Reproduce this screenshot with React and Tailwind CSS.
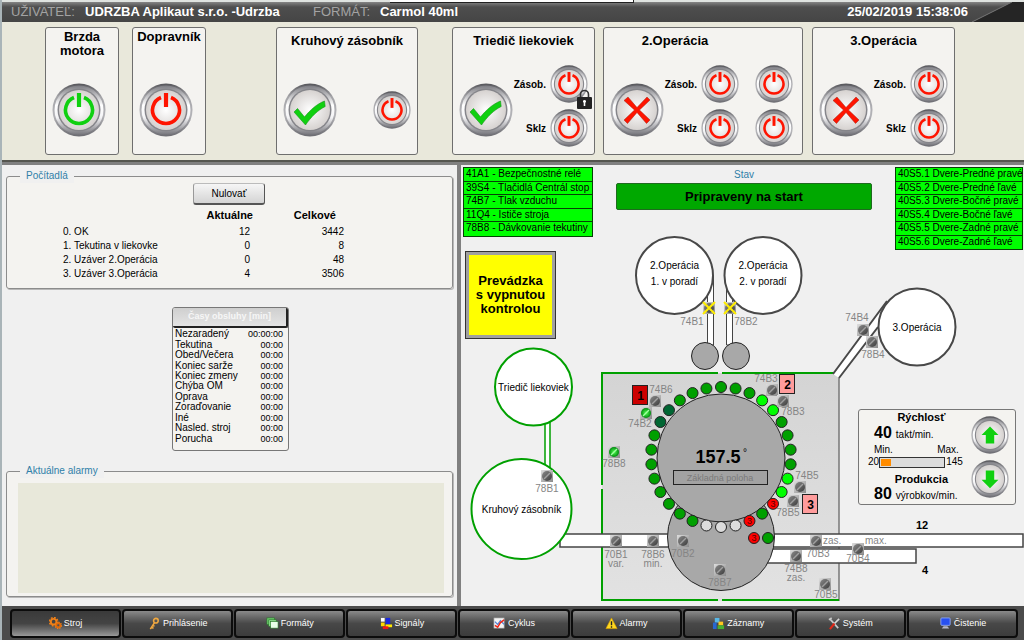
import { useId } from "react"

const COUNTERS = [
  { label: "0. OK", current: 12, total: 3442 },
  { label: "1. Tekutina v liekovke", current: 0, total: 8 },
  { label: "2. Uzáver 2.Operácia", current: 0, total: 48 },
  { label: "3. Uzáver 3.Operácia", current: 4, total: 3506 },
]

const TIMES = [
  ["Nezaradený", "00:00:00"],
  ["Tekutina", "00:00"],
  ["Obed/Večera", "00:00"],
  ["Koniec sarže", "00:00"],
  ["Koniec zmeny", "00:00"],
  ["Chýba OM", "00:00"],
  ["Oprava", "00:00"],
  ["Zoraďovanie", "00:00"],
  ["Iné", "00:00"],
  ["Nasled. stroj", "00:00"],
  ["Porucha", "00:00"],
]

const SAFETY = [
  "41A1 - Bezpečnostné relé",
  "39S4 - Tlačidlá Centrál stop",
  "74B7 - Tlak vzduchu",
  "11Q4 - Ističe stroja",
  "78B8 - Dávkovanie tekutiny",
]

const DOORS = [
  "40S5.1 Dvere-Predné pravé",
  "40S5.2 Dvere-Predné ľavé",
  "40S5.3 Dvere-Bočné pravé",
  "40S5.4 Dvere-Bočné ľavé",
  "40S5.5 Dvere-Zadné pravé",
  "40S5.6 Dvere-Zadné ľavé",
]

// sensor centre, label centre, optional second line
const SENSORS = [
  { id: "78B1", x: 547, y: 476, tx: 547, ty: 492 },
  { id: "74B1", x: 709, y: 308, tx: 692, ty: 325, off: true },
  { id: "78B2", x: 730, y: 308, tx: 746, ty: 325, off: true },
  { id: "74B4", x: 863, y: 330, tx: 857, ty: 321 },
  { id: "78B4", x: 872, y: 342, tx: 873, ty: 358 },
  { id: "74B6", x: 655, y: 401, tx: 661, ty: 393 },
  { id: "74B2", x: 646, y: 413, tx: 640, ty: 427, on: true },
  { id: "78B8", x: 614, y: 452, tx: 614, ty: 467, on: true },
  { id: "74B3", x: 772, y: 390, tx: 766, ty: 382 },
  { id: "78B3", x: 783, y: 401, tx: 793, ty: 415 },
  { id: "74B5", x: 800, y: 487, tx: 807, ty: 479 },
  { id: "78B5", x: 793, y: 501, tx: 788, ty: 516 },
  { id: "70B1", x: 616, y: 541, tx: 616, ty: 558, sub: "var." },
  { id: "78B6", x: 653, y: 541, tx: 653, ty: 558, sub: "min." },
  { id: "70B2", x: 683, y: 541, tx: 683, ty: 557 },
  { id: "78B7", x: 720, y: 570, tx: 720, ty: 586 },
  { id: "70B3", x: 816, y: 541, tx: 818, ty: 557 },
  { id: "74B8", x: 796, y: 556, tx: 796, ty: 572, sub: "zas." },
  { id: "70B5", x: 825, y: 584, tx: 826, ty: 598 },
  { id: "70B4", x: 858, y: 549, tx: 858, ty: 562 },
]

// carousel pockets, clockwise from the top
const POCKETS = "gggllggggllrgrwwwggggggggddggg"
const POCKET_FILL = { g: "#00a000", l: "#00ff00", r: "#ff0000", w: "#dcdcdc", d: "#006633" }

function RoundButton({ size = "small", label, children }) {
  const id = useId()
  const big = size === "large"
  return (
    <button type="button" aria-label={label} className={`block shrink-0 rounded-full ${big ? "size-[54px]" : "size-[38px]"}`}>
      <svg viewBox="-27 -27 54 54" className="size-full">
        <defs>
          <linearGradient id={`${id}a`} x1="0" y1="0" x2="0" y2="1">
            <stop offset="0" stopColor="#55555a" />
            <stop offset="0.25" stopColor="#a4a4a8" />
            <stop offset="0.6" stopColor="#b4b4b8" />
            <stop offset="1" stopColor="#6c6c72" />
          </linearGradient>
          <linearGradient id={`${id}b`} x1="0" y1="0" x2="0" y2="1">
            <stop offset="0" stopColor="#7c7c82" />
            <stop offset="0.4" stopColor="#ffffff" />
            <stop offset="0.65" stopColor="#f4f4f6" />
            <stop offset="1" stopColor="#77777d" />
          </linearGradient>
          <radialGradient id={`${id}c`}>
            <stop offset="0" stopColor="#ffffff" />
            <stop offset="1" stopColor="#d6d2d0" />
          </radialGradient>
        </defs>
        <circle r="26.500" fill={`url(#${id}a)`} />
        <circle r="24.500" fill={`url(#${id}b)`} />
        <circle r="21.500" fill="#85858a" />
        <circle r="20" fill={`url(#${id}c)`} />
        {children}
      </svg>
    </button>
  )
}

function Power({ color = "#ff1400", size, label }) {
  return (
    <RoundButton size={size} label={label}>
      <path d="M-5 -12.500A13.500 13.500 0 1 0 5 -12.500" fill="none" stroke={color} strokeWidth="3.600" />
      <path d="M0 -17V-3" stroke={color} strokeWidth="4.200" />
    </RoundButton>
  )
}

function Check({ label }) {
  return (
    <RoundButton size="large" label={label}>
      <path d="M-16 2L-12.500 -1.500L-5.500 7C0 0 7 -6 14.500 -9L15.200 -3.500C8 0 1 7 -4.500 15Z" fill="#10d010" stroke="#14931a" strokeWidth="0.6" />
    </RoundButton>
  )
}

function Cross({ label }) {
  return (
    <RoundButton size="large" label={label}>
      <path d="M-13 -9.500L-9 -13L0 -2.500L10 -13L13 -10L2.500 0L13 10L9.500 13.500L0 2.500L-9.500 13.500L-13 10L-2.500 0Z" fill="#ff1400" stroke="#a02010" strokeWidth="0.5" />
    </RoundButton>
  )
}

function Lock() {
  return (
    <svg viewBox="0 0 15 20" className="pointer-events-none absolute -right-1 top-6 h-5 w-[15px]">
      <path d="M3.500 9V5.500a4 4 0 0 1 8 0V9" fill="none" stroke="#333" strokeWidth="1.600" />
      <rect y="8" width="15" height="12" rx="1" fill="#222" />
      <path d="M7.500 11a1.500 1.500 0 0 1 .8 2.800V17H6.700v-3.200A1.500 1.500 0 0 1 7.500 11" fill="#fff" />
    </svg>
  )
}

function Card({ title, className = "", children }) {
  return (
    <section className={`flex h-[128px] flex-col rounded-[3px] border border-[#6e6e6e] bg-[#f4f3f0] ${className}`}>
      <h2 className="pt-[2px] text-center text-[13px] leading-[14px] font-bold">{title}</h2>
      {children}
    </section>
  )
}

function FeedControls({ columns = 1, locked, name }) {
  const cols = Array.from({ length: columns }, (_, i) => i)
  return (
    <div className="flex flex-col gap-[6px]">
      {["Zásob.", "Sklz"].map((row, r) => (
        <div key={row} className="flex items-center justify-end gap-1">
          <span className="text-[10px] font-bold">{row}</span>
          <div className="flex gap-4">
            {cols.map((c) => (
              <div key={c} className="relative">
                <Power label={`${name} ${row} ${c + 1}`} />
                {locked && r === 0 && <Lock />}
              </div>
            ))}
          </div>
        </div>
      ))}
    </div>
  )
}

function Toolbar() {
  return (
    <div className="grid grid-cols-[43fr_74fr_13fr_74fr_70fr_142fr_34fr_143fr_8fr_200fr_9fr_143fr_69fr] border-b-2 border-[#55564f] bg-[#e9e8db] py-[5px]">
      <Card title={<>Brzda<br />motora</>} className="col-start-2">
        <div className="mt-auto mb-[17px] flex justify-center pr-[6px]">
          <Power size="large" color="#10d010" label="Brzda motora" />
        </div>
      </Card>
      <Card title="Dopravník" className="col-start-4">
        <div className="mt-auto mb-[17px] flex justify-center pr-[6px]">
          <Power size="large" label="Dopravník" />
        </div>
      </Card>
      <Card title="Kruhový zásobník" className="col-start-6 pt-1">
        <div className="mt-auto mb-[17px] flex items-center justify-between px-[6px]">
          <Check label="Kruhový zásobník" />
          <Power label="Kruhový zásobník zap." />
        </div>
      </Card>
      <Card title="Triedič liekoviek" className="col-start-8 pt-1">
        <div className="mt-auto mb-[7px] flex items-end justify-between px-[6px]">
          <div className="pb-[10px]"><Check label="Triedič liekoviek" /></div>
          <FeedControls name="Triedič" locked />
        </div>
      </Card>
      <Card title={<span className="block pr-14">2.Operácia</span>} className="col-start-10 pt-1">
        <div className="mt-auto mb-[7px] flex items-end justify-between px-[6px] pr-[9px]">
          <div className="pb-[10px]"><Cross label="2.Operácia" /></div>
          <FeedControls name="2.Operácia" columns={2} />
        </div>
      </Card>
      <Card title="3.Operácia" className="col-start-12 pt-1">
        <div className="mt-auto mb-[7px] flex items-end justify-between px-[6px]">
          <div className="pb-[10px]"><Cross label="3.Operácia" /></div>
          <FeedControls name="3.Operácia" />
        </div>
      </Card>
    </div>
  )
}

function Header() {
  return (
    <header className="relative bg-[#dfe3e0] pt-[2px]">
      <div className="absolute top-0 left-[38%] h-[3px] w-[244px] border-r border-b border-[#222] bg-white" />
      <div className="flex h-5 items-center bg-linear-to-b from-[#858585] via-[#4e4e4e] via-25% to-[#454545] pl-[9px] text-[13px] leading-5 text-white">
        <span className="w-[74px] text-[#a3a3a3]">UŽIVATEĽ:</span>
        <span className="w-[228px] font-bold whitespace-nowrap">UDRZBA Aplikaut s.r.o. -Udrzba</span>
        <span className="w-[67px] text-[#a3a3a3]">FORMÁT:</span>
        <span className="font-bold">Carmol 40ml</span>
        <time className="ml-auto pr-1 font-bold">25/02/2019 15:38:06</time>
        <svg viewBox="0 0 52 20" className="h-5 w-[52px]">
          <path d="M0 20L40 0H52V20Z" fill="#252525" />
          <path d="M0 20L40 0" stroke="#777" />
        </svg>
      </div>
    </header>
  )
}

function Counters() {
  return (
    <fieldset className="rounded-[3px] border border-[#8c8c8c] bg-[#f4f3f0] pb-[7px] shadow-[1px_1px_0_#b8b8b8]">
      <legend className="ml-[13px] bg-[#f0f0f0] px-[6px] text-[10px] leading-[14px] text-[#2f7fa8]">Počítadlá</legend>
      <div className="flex pl-[186px]">
        <button type="button" className="h-[22px] w-[72px] rounded-[3px] border border-t-[#bbb] border-r-[#555] border-b-2 border-b-[#555] border-l-[#999] bg-linear-to-b from-[#f6f6f6] to-[#d4d4d4] text-[10px]">
          Nulovať
        </button>
      </div>
      <table className="ml-[56px] text-[10px] leading-[14px]">
        <thead>
          <tr className="h-5 text-[11px]">
            <td className="w-[110px]" />
            <th className="w-[80px] text-right">Aktuálne</th>
            <th className="w-[91px] pr-2 text-right">Celkové</th>
          </tr>
        </thead>
        <tbody>
          {COUNTERS.map((c) => (
            <tr key={c.label}>
              <td className="whitespace-nowrap">{c.label}</td>
              <td className="pr-[3px] text-right">{c.current}</td>
              <td className="text-right">{c.total}</td>
            </tr>
          ))}
        </tbody>
      </table>
    </fieldset>
  )
}

function OperatorTimes() {
  return (
    <section className="mt-[18px] ml-[166px] w-[117px] rounded-[3px] border border-[#777] bg-[#f4f3f0] pb-[6px]">
      <button type="button" className="block h-5 w-full rounded-[2px] border-r-2 border-b-2 border-[#222] bg-linear-to-b from-[#cfcfcf] to-[#e4e4e4] text-[9px] font-bold text-[#f6f6f6]">
        Časy obsluhy [min]
      </button>
      <table className="mt-px h-[115px] w-full text-[10px] leading-[10px]">
        <tbody>
          {TIMES.map(([name, value]) => (
            <tr key={name}>
              <td className="p-0 pl-[2px] whitespace-nowrap">{name}</td>
              <td className="p-0 pr-[5px] text-right text-[9px]">{value}</td>
            </tr>
          ))}
        </tbody>
      </table>
    </section>
  )
}

function Alarms() {
  return (
    <fieldset className="mt-auto rounded-[3px] border border-[#8c8c8c] bg-[#f4f3f0] px-2 pb-[3px] shadow-[1px_1px_0_#b8b8b8]">
      <legend className="ml-[5px] bg-[#f0f0f0] px-[6px] text-[10px] leading-[14px] text-[#2f7fa8]">Aktuálne alarmy</legend>
      <div className="mt-[5px] ml-[3px] h-[110px] bg-[#e8e8da]" />
    </fieldset>
  )
}

function SignalList({ items, className }) {
  return (
    <ul className={`grid auto-rows-fr divide-y divide-[#064006] border border-[#064006] bg-[#00ff00] text-[10px] leading-[12px] ${className}`}>
      {items.map((item) => (
        <li key={item} className="pl-[2px] whitespace-nowrap">{item}</li>
      ))}
    </ul>
  )
}

function Sensor({ x, y, on, off }) {
  return (
    <g transform={`translate(${x} ${y})`}>
      <rect x="-6" y="-6" width="12" height="12" fill="url(#plate)" />
      <circle r="5" fill={on ? "url(#lampOn)" : "url(#lamp)"} />
      {off ? (
        <path d="M-6 -6L6 6M-6 6L6 -6" stroke="#ffee00" strokeWidth="2" />
      ) : (
        <path d="M-3 3L3 -3" stroke={on ? "#a0ffa0" : "#a0a0a0"} strokeWidth="1.500" />
      )}
    </g>
  )
}

function Tank({ x, y, r = 38.5, color = "#484848", lines }) {
  return (
    <g>
      <circle cx={x} cy={y} r={r} fill="#fff" stroke={color} strokeWidth="2" />
      {lines.map((line, i) => (
        <text key={line} x={x} y={y + 4 + (lines.length > 1 ? i * 16 - 11 : 0)} fontSize="10" textAnchor="middle">{line}</text>
      ))}
    </g>
  )
}

function Badge({ x, y, fill, children }) {
  return (
    <g>
      <rect x={x} y={y} width="15" height="19" fill={fill} stroke="#222" />
      <text x={x + 8} y={y + 14} fontSize="12" fontWeight="bold" textAnchor="middle">{children}</text>
    </g>
  )
}

function Pocket({ x, y, kind }) {
  return (
    <g>
      <circle cx={x} cy={y} r="5.500" fill={POCKET_FILL[kind]} stroke="#222" />
      {kind === "r" && <text x={x} y={y + 3} fontSize="9" textAnchor="middle" fill="#500">3</text>}
    </g>
  )
}

function MachineDiagram() {
  return (
    <svg viewBox="461 165 563 441" preserveAspectRatio="xMinYMin meet" className="absolute inset-0 size-full" role="img" aria-label="Schéma stroja">
      <defs>
        <linearGradient id="plate" x1="0" y1="0" x2="1" y2="1">
          <stop offset="0" stopColor="#dedede" />
          <stop offset="1" stopColor="#8a8a8a" />
        </linearGradient>
        <linearGradient id="lamp" x1="0" y1="0" x2="1" y2="1">
          <stop offset="0" stopColor="#8a8a8a" />
          <stop offset="1" stopColor="#3c3c3c" />
        </linearGradient>
        <radialGradient id="lampOn">
          <stop offset="0" stopColor="#50ff50" />
          <stop offset="1" stopColor="#008a10" />
        </radialGradient>
        <linearGradient id="bed" x1="0" y1="0" x2="0" y2="1">
          <stop offset="0" stopColor="#d4d4d4" />
          <stop offset="1" stopColor="#e2e2e2" />
        </linearGradient>
      </defs>

      {/* feed pipes */}
      <path d="M707.500 276V345H713.500V276Z M726.500 276V345H732.500V276Z" fill="#fff" stroke="#444" />
      <path d="M545 415V470H550V415Z" fill="#fff" stroke="#00a000" strokeWidth="1.500" />

      {/* machine bed */}
      <rect x="602" y="373" width="237" height="228" fill="url(#bed)" />
      <path d="M839 373V601" stroke="#777" strokeWidth="1.500" />
      <path d="M718 373H602V485M602 489V600H718M722 373H839M722 600H839" fill="none" stroke="#00a000" strokeWidth="2" />
      <path d="M833 374L887 301L878 327L839 378Z" fill="#fff" />
      <path d="M833 374L887 301M839 378L878 327" stroke="#484848" strokeWidth="2" />

      {/* conveyors */}
      <rect x="560" y="534" width="463" height="13" fill="#fff" stroke="#444" strokeWidth="1.500" />
      <rect x="740" y="549" width="176" height="14" fill="#fff" stroke="#444" strokeWidth="1.500" />

      <Tank x={674.5} y={275.5} lines={["2.Operácia", "1. v poradí"]} />
      <Tank x={763} y={275.5} lines={["2.Operácia", "2. v poradí"]} />
      <Tank x={917} y={327} lines={["3.Operácia"]} />
      <Tank x={533.5} y={387} color="#00a000" lines={["Triedič liekoviek"]} />
      <Tank x={521.5} y={509} r={50} color="#00a000" lines={["Kruhový zásobník"]} />
      <circle cx="705" cy="356" r="13.500" fill="#a8a8a8" stroke="#222" />
      <circle cx="736" cy="356" r="13.500" fill="#a8a8a8" stroke="#222" />

      <circle cx="721" cy="537" r="53.500" fill="#a8a8a8" stroke="#222" />
      <circle cx="721" cy="458" r="64" fill="#a8a8a8" stroke="#222" />
      {[...POCKETS].map((kind, i) => {
        const a = (i * Math.PI) / 15
        return <Pocket key={i} x={721 + 70 * Math.sin(a)} y={457 - 70 * Math.cos(a)} kind={kind} />
      })}
      <Pocket x={754} y={538} kind="r" />
      <Pocket x={768} y={538} kind="g" />

      <text x="718" y="463" fontSize="18" fontWeight="bold" textAnchor="middle">157.5</text>
      <text x="743" y="456" fontSize="10">°</text>
      <rect x="673.500" y="470.500" width="94" height="14" fill="#a2a2a2" stroke="#222" />
      <text x="720" y="481" fontSize="9" textAnchor="middle" fill="#7a7a7a">Základná poloha</text>

      {SENSORS.map((s) => (
        <g key={s.id} fontSize="10" textAnchor="middle" fill="#858585">
          <Sensor {...s} />
          <text x={s.tx} y={s.ty}>{s.id}</text>
          {s.sub && <text x={s.tx} y={s.ty + 9}>{s.sub}</text>}
        </g>
      ))}
      <text x="823" y="544" fontSize="10" fill="#858585">zas.</text>
      <text x="865" y="544" fontSize="10" fill="#858585">max.</text>
      <text x="916" y="529" fontSize="11" fontWeight="bold">12</text>
      <text x="922" y="574" fontSize="11" fontWeight="bold">4</text>

      <Badge x={632.5} y={385.5} fill="#cc0000">1</Badge>
      <Badge x={779.5} y={374.5} fill="#ff9c9c">2</Badge>
      <Badge x={802.5} y={494.5} fill="#ff9c9c">3</Badge>
    </svg>
  )
}

function SpeedPanel() {
  const min = 20
  const max = 145
  const speed = 40
  return (
    <section className="absolute top-[244px] right-2 flex h-[96px] w-[158px] justify-between rounded-[3px] border border-[#777] bg-[#f4f3f0] pr-[6px] pl-[9px]">
      <div className="text-[10px] leading-3">
        <h3 className="pl-3 text-center text-[11px] leading-[14px] font-bold">Rýchlosť</h3>
        <p className="flex items-baseline gap-1 pl-[6px] leading-[18px]"><b className="text-[16px]">40</b> takt/min.</p>
        <div className="flex justify-between px-[6px] pr-1"><span>Min.</span><span>Max.</span></div>
        <div className="flex items-center">
          <span>{min}</span>
          <div role="meter" aria-label="Rýchlosť" aria-valuemin={min} aria-valuemax={max} aria-valuenow={speed} className="h-[11px] w-[66px] border border-[#333] bg-[#dcdcdc] p-px">
            <div className="h-full bg-[#ff8c00]" style={{ width: `${((speed - min) / (max - min)) * 100}%` }} />
          </div>
          <span className="pl-px">{max}</span>
        </div>
        <h3 className="mt-1 pl-3 text-center text-[11px] leading-[14px] font-bold">Produkcia</h3>
        <p className="flex items-baseline gap-1 pl-[6px] leading-[16px]"><b className="text-[16px]">80</b> výrobkov/min.</p>
      </div>
      <div className="-ml-2 flex flex-col justify-center gap-[6px]">
        <RoundButton label="Zvýšiť rýchlosť">
          <path d="M0 -12L12 0H6V12H-6V0H-12Z" fill="#10d010" />
        </RoundButton>
        <RoundButton label="Znížiť rýchlosť">
          <path d="M0 13L12 1H6V-12H-6V1H-12Z" fill="#10d010" />
        </RoundButton>
      </div>
    </section>
  )
}

function MachinePanel() {
  return (
    <section className="relative flex-1 bg-[#f0f0f0]">
      <MachineDiagram />
      <div className="relative flex items-start justify-between pt-[2px] pr-[1px] pl-[2px]">
        <div>
          <SignalList items={SAFETY} className="h-[70px] w-[130px]" />
          <div className="mt-[14px] ml-[2px] flex h-[88px] w-[91px] items-center justify-center border border-[#333] bg-[#a0a0a0] p-[3px]">
            <p className="flex size-full items-center justify-center bg-[#ffff00] text-center text-[13px] leading-[14px] font-bold">
              Prevádzka<br />s vypnutou<br />kontrolou
            </p>
          </div>
        </div>
        <div className="w-[256px] text-center">
          <p className="h-4 text-[10px] leading-[16px] text-[#2f7fa8]">Stav</p>
          <p role="status" className="h-[27px] rounded-[2px] border border-[#1f6b1f] bg-[#00a800] text-[13px] leading-[25px] font-bold">Pripraveny na start</p>
        </div>
        <SignalList items={DOORS} className="h-[83px] w-[128px]" />
      </div>
      <SpeedPanel />
    </section>
  )
}

const TABS = [
  {
    name: "Stroj",
    icon: (
      <g fill="none" stroke="#f08018">
        <circle cx="5" cy="5" r="3" strokeWidth="2" />
        <circle cx="5" cy="5" r="4.500" strokeWidth="1.500" strokeDasharray="2 1.500" />
        <circle cx="10" cy="9" r="2.200" strokeWidth="2" stroke="#e06808" />
        <circle cx="10" cy="9" r="3.500" strokeWidth="1.200" strokeDasharray="1.500 1.200" />
      </g>
    ),
  },
  {
    name: "Prihlásenie",
    icon: (
      <g fill="none" stroke="#f0a840" strokeWidth="1.700">
        <circle cx="8.500" cy="4" r="2.500" />
        <path d="M7 6L2.500 13M3.500 11L6 12M5 9L7 10" />
      </g>
    ),
  },
  {
    name: "Formáty",
    icon: (
      <g stroke="#287828" strokeWidth="0.700">
        <rect x="1" y="1" width="8" height="7" fill="#70d070" />
        <rect x="3" y="3" width="8" height="7" fill="#90e090" />
        <rect x="5" y="5" width="8" height="7" fill="#e8ffe8" />
      </g>
    ),
  },
  {
    name: "Signály",
    icon: (
      <g>
        <path d="M1 1h4v4H1z" fill="#fff" />
        <path d="M6 1h5v7H6z" fill="#1828e0" />
        <path d="M1 6h4v4H1z" fill="#ffd800" />
        <path d="M6 8h7v3H6z" fill="#ffe800" />
        <path d="M3 10h6v3H3z" fill="#f01818" />
      </g>
    ),
  },
  {
    name: "Cyklus",
    icon: (
      <g>
        <rect x="1" y="1" width="11" height="11" fill="#f4f4f4" stroke="#999" strokeWidth="0.700" />
        <path d="M2 5l3 3 3-4 4 4" fill="none" stroke="#5080d8" strokeWidth="1.300" />
        <path d="M2 9l3 2 3-5 4-3" fill="none" stroke="#f02818" strokeWidth="1.600" />
      </g>
    ),
  },
  {
    name: "Alarmy",
    icon: (
      <g>
        <path d="M7 1L13 12.500H1Z" fill="#ffd820" stroke="#d8a000" strokeWidth="0.700" />
        <path d="M7 4.500V9M7 10V11.500" stroke="#222" strokeWidth="1.500" />
      </g>
    ),
  },
  {
    name: "Záznamy",
    icon: (
      <g>
        <path d="M3 1h5v5H3z" fill="#58b8e8" />
        <path d="M1 6h4v7H1z" fill="#2868d0" />
        <path d="M7 5h5v4H7z" fill="#ffc820" />
        <path d="M6 9h7v4H6z" fill="#48b030" />
      </g>
    ),
  },
  {
    name: "Systém",
    icon: (
      <g fill="none" strokeWidth="1.800">
        <path d="M2 2L11 12M1 3l3-2" stroke="#c8c8c8" />
        <path d="M12 2L7 7" stroke="#d8d8d8" />
        <path d="M7 7L2 13" stroke="#e02818" strokeWidth="2.300" />
      </g>
    ),
  },
  {
    name: "Čistenie",
    icon: (
      <g>
        <rect x="2" y="1" width="10" height="8" rx="1" fill="#2850f0" stroke="#90a8f0" />
        <path d="M5 10h4l2 2.500H3z" fill="#b8b8c8" />
      </g>
    ),
  },
]

function BottomNav() {
  return (
    <nav className="flex h-[34px] shrink-0 gap-px bg-[#4b4b4b] pt-[3px] pr-[6px] pb-[2px] pl-2">
      {TABS.map((tab, i) => (
        <button
          key={tab.name}
          type="button"
          aria-current={i === 0 ? "page" : undefined}
          className={`flex flex-1 items-center justify-center gap-[2px] rounded-[4px] border-2 border-[#0c0c0c] text-[9px] text-white ${
            i === 0
              ? "bg-linear-to-b from-[#3a3a3a] via-[#444] to-[#9a9a9a]"
              : "bg-linear-to-b from-[#8a8a8a] via-[#484848] via-50% to-[#3c3c3c]"
          }`}
        >
          <svg viewBox="0 0 14 14" className="size-[13px]" aria-hidden="true">{tab.icon}</svg>
          {tab.name}
        </button>
      ))}
    </nav>
  )
}

export default function App() {
  return (
    <div className="flex min-h-screen flex-col border-l-2 border-[#a9b4b8] bg-[#f0f0f0] font-['Liberation_Sans',Arial,sans-serif] text-black">
      <Header />
      <Toolbar />
      <main className="flex flex-1 border-t-3 border-[#808080]">
        <div className="flex w-[455px] shrink-0 flex-col pt-1 pr-1 pb-[9px] pl-1">
          <Counters />
          <OperatorTimes />
          <Alarms />
        </div>
        <div className="w-1 bg-[#808080]" />
        <MachinePanel />
      </main>
      <BottomNav />
    </div>
  )
}
